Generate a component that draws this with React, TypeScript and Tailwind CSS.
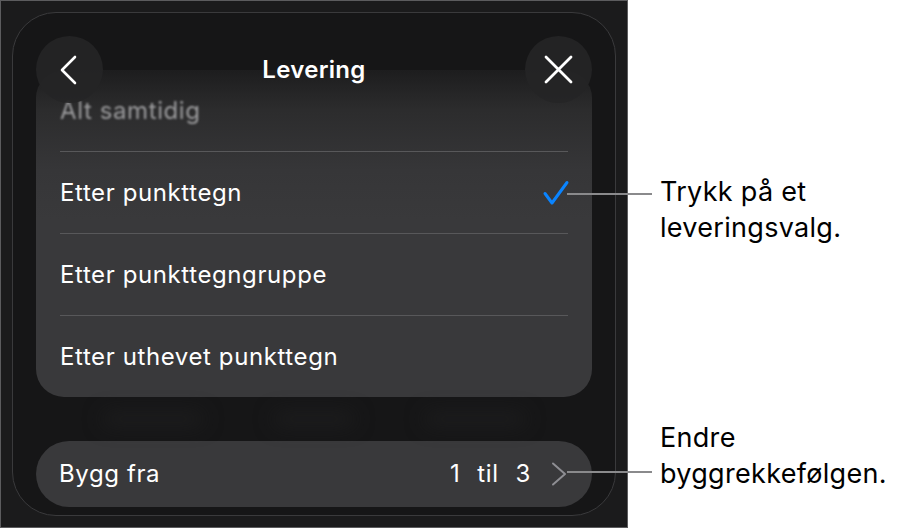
import React from "react";

const font = { fontFamily: "Inter, 'Noto Sans', sans-serif" };

const Row = ({ label, checked, muted }: { label: string; checked?: boolean; muted?: boolean }) => (
  <div className="h-[81px] flex items-center justify-between px-6">
    <span
      className={
        muted
          ? "text-[24px] text-[#9c9c9e] blur-[1.2px] tracking-[0.6px]"
          : "text-[24px] text-white tracking-[0.6px]"
      }
    >
      {label}
    </span>
    {checked && (
      <svg width="28" height="28" viewBox="0 0 28 28" className="mr-[-2px]">
        <path d="M3 14.5 L10 24 L25 3.5" fill="none" stroke="#0a84ff" strokeWidth="3" strokeLinecap="round" strokeLinejoin="round" />
      </svg>
    )}
  </div>
);

const Sep = () => <div className="mx-6 h-px bg-[#58585a]" />;

export default function App() {
  return (
    <div className="w-[899px] h-[529px] bg-white flex relative" style={font}>
      <div className="w-[628px] h-[528px] border border-[#5c5c5e] bg-[#1b1b1c] p-[11px]">
        <div className="relative h-full rounded-[44px] border border-[#3a3a3c] bg-[#161617] px-[23px] pt-[57px] pb-[8px] flex flex-col">
          {/* header floats over the list */}
          <div className="absolute top-[23px] left-[23px] right-[23px] h-[67px] flex items-center justify-between z-10">
            <button className="w-[67px] h-[67px] rounded-full bg-[#252526]/90 flex items-center justify-center">
              <svg width="67" height="67" viewBox="0 0 67 67">
                <path d="M39 21 L26 34 L39 47" fill="none" stroke="white" strokeWidth="2.6" strokeLinecap="round" strokeLinejoin="round" />
              </svg>
            </button>
            <span className="text-[24px] font-semibold text-white tracking-[0.3px]">Levering</span>
            <button className="w-[67px] h-[67px] rounded-full bg-[#252526]/90 flex items-center justify-center">
              <svg width="67" height="67" viewBox="0 0 67 67">
                <path d="M21 21 L46 46 M46 21 L21 46" fill="none" stroke="white" strokeWidth="2.8" strokeLinecap="round" />
              </svg>
            </button>
          </div>

          <div className="rounded-[28px] bg-[linear-gradient(to_bottom,#1d1d1e_0px,#2c2c2d_40px,#363638_100px,#39393b_150px)]">
            <Row label="Alt samtidig" muted />
            <Sep />
            <Row label="Etter punkttegn" checked />
            <Sep />
            <Row label="Etter punkttegngruppe" />
            <Sep />
            <Row label="Etter uthevet punkttegn" />
          </div>

          <div className="h-[44px] flex items-center justify-around px-8">
            <div className="w-[100px] h-[10px] rounded-full bg-[#202021] blur-[10px]" />
            <div className="w-[80px] h-[10px] rounded-full bg-[#202021] blur-[10px]" />
            <div className="w-[100px] h-[10px] rounded-full bg-[#202021] blur-[10px]" />
          </div>

          <div className="h-[66px] rounded-full bg-[#39393b] flex items-center justify-between pl-[23px] pr-[25px]">
            <span className="text-[24px] text-white tracking-[0.6px]">Bygg fra</span>
            <div className="flex items-center">
              <span className="text-[24px] text-white tracking-[0.6px] flex gap-[17px]">
                <span>1</span>
                <span>til</span>
                <span>3</span>
              </span>
              <svg width="16" height="24" viewBox="0 0 16 24" className="ml-[20px]">
                <path d="M2 1.5 L14 12 L2 22.5" fill="none" stroke="#8e8e93" strokeWidth="2" strokeLinecap="round" strokeLinejoin="round" />
              </svg>
            </div>
          </div>
        </div>
      </div>

      <div className="flex-1 pl-[32px] pt-[174px] flex flex-col gap-[174px] text-black">
        <p className="text-[27px] leading-[36px] tracking-[0.3px]">
          Trykk på et
          <br />
          leveringsvalg.
        </p>
        <p className="text-[27px] leading-[36px] tracking-[0.3px]">
          Endre
          <br />
          byggrekkefølgen.
        </p>
      </div>

      {/* callout lines */}
      <div className="absolute left-[567px] top-[193px] w-[85px] h-[2px] bg-[#8a8a8c]" />
      <div className="absolute left-[567px] top-[471px] w-[85px] h-[2px] bg-[#8a8a8c]" />
    </div>
  );
}
